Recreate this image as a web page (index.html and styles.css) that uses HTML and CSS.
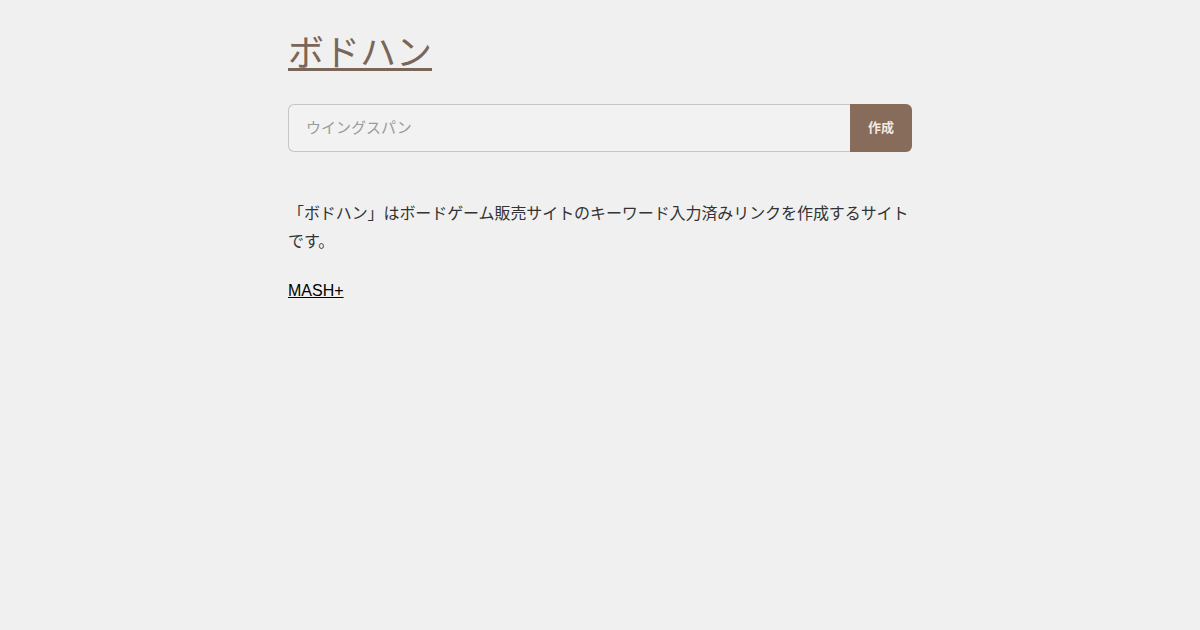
FILE: index.html
```html
<!DOCTYPE html>
<html lang="ja">
<head>
    <meta charset="UTF-8">
    <meta name="viewport" content="width=device-width, initial-scale=1.0">
    <title>ボドハン</title>
    <link rel="stylesheet" href="styles.css">
</head>
<body>
    <div class="container">
        <h1 class="title"><a href="#">ボドハン</a></h1>

        <form class="search-form">
            <input type="text" class="search-input" placeholder="ウイングスパン">
            <button type="submit" class="search-button">作成</button>
        </form>

        <p class="description">「ボドハン」はボードゲーム販売サイトのキーワード入力済みリンクを作成するサイトです。</p>

        <a class="credit" href="#">MASH+</a>
    </div>
</body>
</html>
```

FILE: styles.css
```css
body {
    background-color: #f0f0f0;
    color: #333;
    font-family: 'Noto Sans CJK JP', 'Noto Sans', sans-serif;
    margin: 0;
    padding: 0;
}

.container {
    width: 624px;
    margin: 0 auto;
    padding-top: 26px;
}

.title {
    font-size: 36px;
    font-weight: 400;
    line-height: 48px;
    margin: 0 0 30px;
}

.title a {
    color: #7a6658;
    text-decoration: underline;
    text-decoration-thickness: 3px;
    text-underline-offset: 2px;
}

.search-form {
    display: flex;
    height: 48px;
}

.search-input {
    flex: 1;
    box-sizing: border-box;
    height: 48px;
    padding: 0 17px 4px;
    border: 1px solid #c6c6c6;
    border-right: none;
    border-radius: 6px 0 0 6px;
    background-color: #f2f2f2;
    font-family: inherit;
    font-size: 15px;
    color: #333;
    outline: none;
}

.search-input::placeholder {
    color: #9a9a9a;
}

.search-button {
    width: 62px;
    height: 48px;
    padding: 0 0 4px;
    border: none;
    border-radius: 0 6px 6px 0;
    background-color: #876b5b;
    color: #f3e9df;
    font-family: inherit;
    font-size: 13px;
    font-weight: 700;
    cursor: pointer;
}

.description {
    font-size: 16px;
    line-height: 28px;
    letter-spacing: -0.08px;
    margin: 46px 0 0;
}

.credit {
    display: inline-block;
    margin-top: 28px;
    font-family: 'Liberation Sans', Arial, sans-serif;
    font-size: 16px;
    color: #000;
}
```
